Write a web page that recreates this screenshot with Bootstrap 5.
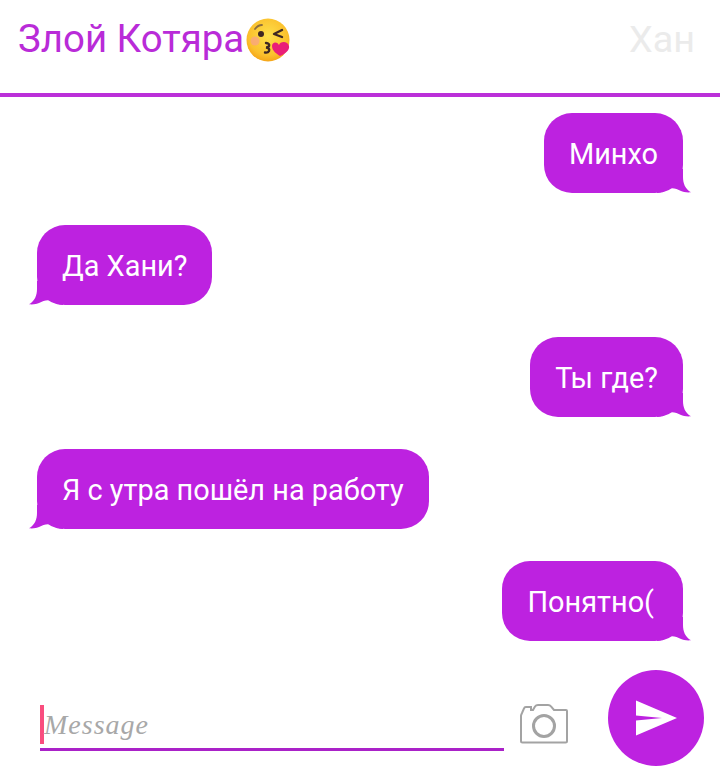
<!DOCTYPE html>
<html lang="en">
<head>
  <meta charset="UTF-8">
  <title>Chat</title>
  <meta name="viewport" content="width=device-width, initial-scale=1">
  <link href="https://cdn.jsdelivr.net/npm/bootstrap@5.3.3/dist/css/bootstrap.min.css" rel="stylesheet">
  <style>
    body {
      background-color: #fff;
      font-family: Roboto, "Liberation Sans", sans-serif;
      width: 720px;
      height: 780px;
      overflow: hidden;
    }
    .chat-top {
      height: 97px;
      padding: 0 25px 0 18px;
      border-bottom: 4px solid #bb2fd9;
    }
    .chat-title {
      font-size: 38.4px;
      line-height: 1;
      color: #b92bd8;
      margin-top: -14px;
    }
    .chat-title svg {
      margin-left: 2px;
    }
    .chat-other {
      font-size: 37.8px;
      line-height: 1;
      color: #ebebeb;
      margin-top: -14px;
    }
    .chat-list {
      padding: 16px 37px 0;
      gap: 32px;
      height: 573px;
    }
    .bubble {
      position: relative;
      height: 80px;
      padding: 2px 25px 0;
      border-radius: 28px;
      background-color: #bd22e0;
      color: #fff;
      font-size: 28.9px;
      line-height: 78px;
      white-space: nowrap;
    }
    .bubble-extra {
      padding-right: 29px;
    }
    .bubble svg {
      position: absolute;
      bottom: 0;
      width: 34px;
      height: 24px;
    }
    .bubble-me svg {
      right: -8px;
    }
    .bubble-them svg {
      left: -8px;
      transform: scaleX(-1);
    }
    .chat-bottom {
      height: 110px;
      padding: 0 16px 0 40px;
    }
    .msg-field {
      width: 464px;
      height: 52px;
      margin-top: 29px;
      border-bottom: 3px solid #aa22c8;
    }
    .msg-caret {
      width: 4px;
      height: 39px;
      margin-top: 6px;
      background-color: #f94d7e;
    }
    .msg-hint {
      font-family: "Liberation Serif", serif;
      font-style: italic;
      font-size: 28px;
      letter-spacing: 1px;
      color: #a8a8a8;
      margin-top: 7px;
      line-height: 38px;
    }
    .cam-icon {
      margin: 32px 0 0 15px;
    }
    .send-btn {
      width: 96px;
      height: 96px;
      margin-left: 39px;
      background-color: #bd22e0;
    }
  </style>
</head>
<body>

<!-- Header -->
<div class="chat-top d-flex justify-content-between align-items-center">
  <div class="chat-title d-flex align-items-center">
    Злой Котяра
    <svg width="44" height="44" viewBox="0 0 44 44">
      <defs>
        <radialGradient id="faceFill" cx="0.5" cy="0.4" r="0.65">
          <stop offset="0" stop-color="#fde04a"/>
          <stop offset="0.7" stop-color="#fbc02d"/>
          <stop offset="1" stop-color="#f39c12"/>
        </radialGradient>
      </defs>
      <circle cx="22" cy="22" r="21.500" fill="url(#faceFill)"/>
      <circle cx="9" cy="23" r="4.500" fill="#f9a18b" opacity="0.7"/>
      <path d="M9 11q3-4 7-4" fill="none" stroke="#8d6e3f" stroke-width="1.800" stroke-linecap="round"/>
      <circle cx="15" cy="16" r="3" fill="#3e2723"/>
      <path d="M36 12l-8 4l8 3" fill="none" stroke="#3e2723" stroke-width="2.400" stroke-linecap="round" stroke-linejoin="round"/>
      <path d="M20 25q4 .5 3 3q-1 1.500-3 1.500q4 .5 3 3.500q-1 2-4 1.500" fill="none" stroke="#3e2723" stroke-width="2.400" stroke-linecap="round"/>
      <path d="M34 38c-3-2-8-5-8-10c0-4 5-5 7-1c1-4 9-4 10 1c1 4-4 8-9 10z" fill="#e91e78"/>
    </svg>
  </div>
  <div class="chat-other">Хан</div>
</div>

<!-- Messages -->
<div class="chat-list d-flex flex-column">
  <div class="bubble bubble-me align-self-end">Минхо
    <svg viewBox="0 0 34 24"><path d="M0 0H26V8C26 14 28 20 34 23.300C30 23.800 26 23 24 22C21 20.500 18 19.300 15 19.300C12 20.500 9 23.500 0 24Z" fill="#bd22e0"/></svg>
  </div>
  <div class="bubble bubble-them align-self-start">Да Хани?
    <svg viewBox="0 0 34 24"><path d="M0 0H26V8C26 14 28 20 34 23.300C30 23.800 26 23 24 22C21 20.500 18 19.300 15 19.300C12 20.500 9 23.500 0 24Z" fill="#bd22e0"/></svg>
  </div>
  <div class="bubble bubble-me align-self-end">Ты где?
    <svg viewBox="0 0 34 24"><path d="M0 0H26V8C26 14 28 20 34 23.300C30 23.800 26 23 24 22C21 20.500 18 19.300 15 19.300C12 20.500 9 23.500 0 24Z" fill="#bd22e0"/></svg>
  </div>
  <div class="bubble bubble-them align-self-start">Я с утра пошёл на работу
    <svg viewBox="0 0 34 24"><path d="M0 0H26V8C26 14 28 20 34 23.300C30 23.800 26 23 24 22C21 20.500 18 19.300 15 19.300C12 20.500 9 23.500 0 24Z" fill="#bd22e0"/></svg>
  </div>
  <div class="bubble bubble-me bubble-extra align-self-end">Понятно(
    <svg viewBox="0 0 34 24"><path d="M0 0H26V8C26 14 28 20 34 23.300C30 23.800 26 23 24 22C21 20.500 18 19.300 15 19.300C12 20.500 9 23.500 0 24Z" fill="#bd22e0"/></svg>
  </div>
</div>

<!-- Input row -->
<div class="chat-bottom d-flex align-items-start">
  <div class="msg-field d-flex">
    <div class="msg-caret"></div>
    <div class="msg-hint">Message</div>
  </div>
  <svg class="cam-icon" width="50" height="42" viewBox="0 0 50 42" fill="none" stroke="#a3a3a3" stroke-width="2">
    <path d="M2 14V39a1.500 1.500 0 0 0 1.500 1.500H46.500a1.500 1.500 0 0 0 1.500-1.500V9a1 1 0 0 0-1-1H35L32 4.500Q31 3 29 3H19Q17 3 16 4.500L14 8L12 8V5H7A2 2 0 0 0 5 6.500L3 11Q2 13 2 14Z"/>
    <circle cx="25" cy="24" r="10.500" stroke-width="3"/>
  </svg>
  <div class="send-btn rounded-circle d-flex align-items-center justify-content-center">
    <svg width="44" height="36" viewBox="0 0 44 36"><path d="M2 0.500L43 18L2 35.500V20.500L28 18L2 15.500Z" fill="#fff"/></svg>
  </div>
</div>

<script src="https://cdn.jsdelivr.net/npm/bootstrap@5.3.3/dist/js/bootstrap.bundle.min.js"></script>
</body>
</html>
